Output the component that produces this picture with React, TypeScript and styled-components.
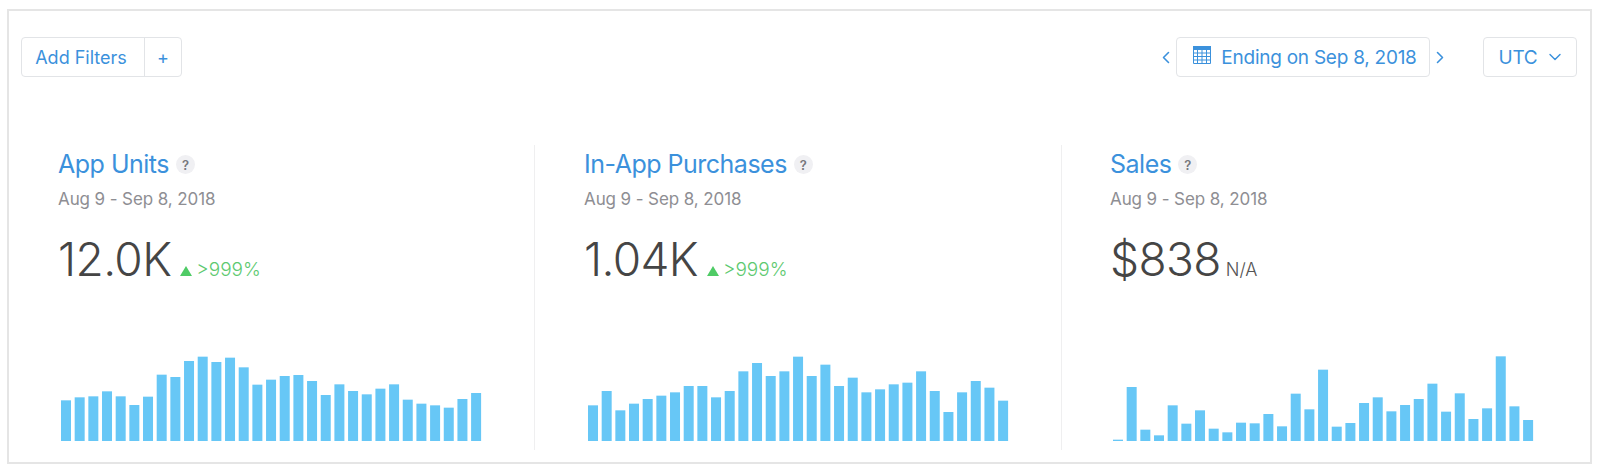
import React from "react";
import styled, { createGlobalStyle } from "styled-components";
import { ChevronDown, ChevronLeft, ChevronRight } from "lucide-react";

const BLUE = "#3b91dc";
const BAR_WIDTH = 10;
const BAR_PITCH = 13.67;
const CHART_HEIGHT = 86;

// bar tops, read off the reference at 3x, 302 being the chart's baseline
const toHeights = (tops: number[]) => tops.map((top) => (302 - top) / 3);

const cards = [
  {
    title: "App Units",
    value: "12.0K",
    change: ">999%",
    inset: 37,
    chartOffset: 3.4,
    bars: toHeights([
      180, 171, 168, 153, 168, 194, 169, 103, 110, 62, 49, 65, 52, 81, 133, 118,
      107, 104, 122, 164, 132, 152, 162, 145, 132, 178, 190, 195, 202, 176, 158,
    ]),
  },
  {
    title: "In-App Purchases",
    value: "1.04K",
    change: ">999%",
    inset: 49,
    chartOffset: 4,
    bars: toHeights([
      195, 152, 210, 190, 176, 166, 156, 137, 137, 171, 152, 93, 68, 107, 93, 49,
      107, 73, 137, 112, 156, 147, 132, 127, 93, 152, 215, 156, 122, 142, 181,
    ]),
  },
  {
    title: "Sales",
    value: "$838",
    inset: 48,
    chartOffset: 3.3,
    bars: toHeights([
      298, 140, 268, 285, 195, 250, 210, 265, 276, 247, 249, 221, 258, 160, 207,
      88, 259, 248, 188, 171, 213, 194, 176, 130, 214, 159, 236, 204, 48, 198, 239,
    ]),
  },
];

const BarChart = ({ bars, offset }: { bars: number[]; offset: number }) => (
  <ChartSvg width={440} height={CHART_HEIGHT} $offset={offset}>
    {bars.map((height, i) => (
      <rect
        key={i}
        x={i * BAR_PITCH}
        y={CHART_HEIGHT - height}
        width={BAR_WIDTH}
        height={height}
        fill="#67c7f6"
      />
    ))}
  </ChartSvg>
);

const CalendarIcon = () => (
  <CalendarSvg width="18" height="18" viewBox="0 0 18 18">
    <rect x="0" y="0" width="18" height="4" fill={BLUE} />
    <path
      d="M.5 3v14.5h17V3M.5 7h17M.5 10.5h17M.5 14h17M4.5 3v14M9 3v14M13.5 3v14"
      fill="none"
      stroke={BLUE}
      strokeWidth="1"
    />
  </CalendarSvg>
);

export default function App() {
  return (
    <>
      <GlobalStyle />
      <Frame>
        <Toolbar>
          <FilterGroup>
            <FilterLabel>Add Filters</FilterLabel>
            <FilterAdd>+</FilterAdd>
          </FilterGroup>
          <Controls>
            <DatePicker>
              <Arrow>
                <ChevronLeft size={21} strokeWidth={1.9} />
              </Arrow>
              <OutlineButton $width={254} $gap={10}>
                <CalendarIcon />
                Ending on Sep 8, 2018
              </OutlineButton>
              <Arrow>
                <ChevronRight size={21} strokeWidth={1.9} />
              </Arrow>
            </DatePicker>
            <OutlineButton $width={94} $gap={8}>
              UTC
              <ChevronDown size={20} strokeWidth={1.7} />
            </OutlineButton>
          </Controls>
        </Toolbar>
        <Cards>
          {cards.map((card) => (
            <Card key={card.title} $inset={card.inset}>
              <TitleRow>
                <Title>{card.title}</Title>
                <Help>?</Help>
              </TitleRow>
              <Period>Aug 9 - Sep 8, 2018</Period>
              <ValueRow>
                <Value>{card.value}</Value>
                {card.change ? (
                  <Change>
                    <UpTriangle />
                    {card.change}
                  </Change>
                ) : (
                  <NotAvailable>N/A</NotAvailable>
                )}
              </ValueRow>
              <BarChart bars={card.bars} offset={card.chartOffset} />
            </Card>
          ))}
        </Cards>
      </Frame>
    </>
  );
}

/**
 * Styles
 */
const GlobalStyle = createGlobalStyle`
  html, body {
    margin: 0;
    background: #fff;
    font-family: Inter, "Liberation Sans", sans-serif;
  }
`;

const Frame = styled.div`
  box-sizing: border-box;
  width: 1585px;
  height: 455px;
  margin: 9px 0 0 7px;
  padding: 26px 13px 0 12px;
  border: 2px solid #e5e5e5;
`;

const Toolbar = styled.div`
  display: flex;
  justify-content: space-between;
  align-items: center;
`;

const FilterGroup = styled.div`
  display: flex;
  box-sizing: border-box;
  height: 40px;
  border: 1px solid #e2e4e7;
  border-radius: 4px;
  color: ${BLUE};
`;

const FilterLabel = styled.div`
  display: flex;
  align-items: center;
  justify-content: center;
  box-sizing: border-box;
  width: 123px;
  padding-right: 4px;
  font-size: 18px;
  border-right: 1px solid #e2e4e7;
`;

const FilterAdd = styled.div`
  display: flex;
  align-items: center;
  justify-content: center;
  width: 36px;
  font-size: 18px;
`;

const Controls = styled.div`
  display: flex;
  align-items: center;
  gap: 33px;
`;

const DatePicker = styled.div`
  display: flex;
  align-items: center;
`;

const Arrow = styled.div`
  display: flex;
  justify-content: center;
  width: 20px;
  color: ${BLUE};
`;

const OutlineButton = styled.div<{ $width: number; $gap: number }>`
  display: flex;
  align-items: center;
  justify-content: center;
  gap: ${({ $gap }) => $gap}px;
  box-sizing: border-box;
  width: ${({ $width }) => $width}px;
  height: 40px;
  padding-left: 4px;
  border: 1px solid #e2e4e7;
  border-radius: 4px;
  color: ${BLUE};
  font-size: 19px;
  letter-spacing: -0.25px;
  white-space: nowrap;
`;

const CalendarSvg = styled.svg`
  margin-top: -5px;
`;

const Cards = styled.div`
  display: grid;
  grid-template-columns: 513px 527px 1fr;
  margin-top: 68px;
`;

const Card = styled.div<{ $inset: number }>`
  display: flex;
  flex-direction: column;
  box-sizing: border-box;
  height: 305px;
  padding-left: ${({ $inset }) => $inset}px;

  & + & {
    border-left: 1px solid #efeff0;
  }
`;

const TitleRow = styled.div`
  display: flex;
  align-items: center;
  gap: 7px;
  height: 32px;
  margin-top: 3px;
`;

const Title = styled.div`
  font-size: 25px;
  letter-spacing: -0.5px;
  color: ${BLUE};
`;

const Help = styled.div`
  display: flex;
  align-items: center;
  justify-content: center;
  width: 19px;
  height: 19px;
  margin-top: 1px;
  border-radius: 50%;
  background: #f0f0f3;
  color: #77777c;
  font-size: 13px;
  font-weight: 600;
`;

const Period = styled.div`
  margin-top: 8px;
  font-size: 17px;
  line-height: 22px;
  letter-spacing: -0.1px;
  color: #8e8e93;
`;

const ValueRow = styled.div`
  display: flex;
  align-items: baseline;
  height: 56px;
  margin-top: 21px;
  line-height: 56px;
`;

const Value = styled.div`
  font-size: 46px;
  font-weight: 300;
  letter-spacing: -0.6px;
  color: #454545;
`;

const Change = styled.div`
  display: flex;
  align-items: baseline;
  gap: 4px;
  margin-left: 9px;
  font-size: 19px;
  font-weight: 300;
  color: #5dc96f;
`;

const UpTriangle = styled.span`
  width: 0;
  height: 0;
  border-left: 6px solid transparent;
  border-right: 6px solid transparent;
  border-bottom: 10px solid #4fcb66;
`;

const NotAvailable = styled.div`
  margin-left: 5px;
  font-size: 18px;
  font-weight: 300;
  color: #555;
`;

const ChartSvg = styled.svg<{ $offset: number }>`
  display: block;
  margin-top: 68px;
  margin-left: ${({ $offset }) => $offset}px;
`;
